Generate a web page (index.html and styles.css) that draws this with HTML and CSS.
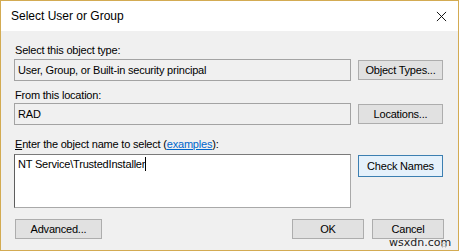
FILE: index.html
```html
<!DOCTYPE html>
<html lang="en">
<head>
    <meta charset="UTF-8">
    <title>Select User or Group</title>
    <link rel="stylesheet" href="styles.css">
</head>
<body>
    <div class="dialog">
        <div class="titlebar">
            <span class="title">Select User or Group</span>
            <svg class="close" viewBox="0 0 12 12" xmlns="http://www.w3.org/2000/svg">
                <path d="M1 1L11 11M11 1L1 11" stroke="#000" stroke-width="1" fill="none" />
            </svg>
        </div>
        <div class="content">
            <div class="label">Select this object type:</div>
            <div class="row">
                <div class="field readonly">User, Group, or Built-in security principal</div>
                <button class="btn">Object Types...</button>
            </div>

            <div class="label second">From this location:</div>
            <div class="row">
                <div class="field readonly">RAD</div>
                <button class="btn">Locations...</button>
            </div>

            <div class="label third"><u>E</u>nter the object name to select (<a href="#" class="link">examples</a>):</div>
            <div class="row names">
                <div class="field editor">NT Service\TrustedInstaller<span class="caret"></span></div>
                <button class="btn default">Check Names</button>
            </div>

            <div class="footer">
                <button class="btn advanced">Advanced...</button>
                <div class="spacer"></div>
                <button class="btn wide">OK</button>
                <button class="btn wide">Cancel</button>
            </div>
        </div>
        <div class="watermark">wsxdn.com</div>
        <div class="grip"></div>
    </div>
</body>
</html>
```

FILE: styles.css
```css
html, body {
    margin: 0;
    padding: 0;
    background: #f0f0f0;
}
.dialog {
    position: relative;
    width: 459px;
    height: 251px;
    box-sizing: border-box;
    border: 1px solid #d3ab52;
    background: #f0f0f0;
    font-family: 'Liberation Sans', Arial, sans-serif;
    font-size: 11px;
    letter-spacing: -0.2px;
    color: #000;
    overflow: hidden;
}
.titlebar {
    height: 30px;
    background: #fff;
    display: flex;
    align-items: center;
    padding: 0 10px;
}
.title {
    flex-grow: 1;
    font-size: 12px;
    letter-spacing: 0;
    color: #000;
}
.close {
    width: 11px;
    height: 11px;
    margin-right: 1px;
}
.content {
    padding: 12px 14px 0 13px;
}
.label {
    height: 14px;
    line-height: 14px;
    padding-left: 1px;
    margin-bottom: 2px;
}
.label.second {
    margin-top: 7px;
    margin-bottom: 1px;
}
.label.third {
    margin-top: 12px;
    margin-bottom: 3px;
}
.link {
    color: #0066cc;
}
.row {
    display: flex;
    align-items: center;
    gap: 7px;
}
.row.names {
    align-items: flex-start;
}
.field {
    width: 337px;
    height: 22px;
    box-sizing: border-box;
    line-height: 20px;
    padding-left: 3px;
    white-space: nowrap;
}
.readonly {
    background: #f0f0f0;
    border: 1px solid #a3a3a3;
}
.editor {
    height: 54px;
    background: #fff;
    border: 1px solid #a9a9a9;
    border-left-color: #5e5e5e;
    border-top-color: #7a7a7a;
    line-height: 18px;
}
.caret {
    display: inline-block;
    width: 1px;
    height: 14px;
    background: #000;
    vertical-align: -3px;
}
.btn {
    width: 85px;
    height: 20px;
    box-sizing: border-box;
    border: 1px solid #adadad;
    background: #e1e1e1;
    font-family: 'Liberation Sans', Arial, sans-serif;
    font-size: 11px;
    letter-spacing: -0.2px;
    color: #000;
    padding: 0;
}
.btn.default {
    height: 22px;
    margin-top: 1px;
    border-color: #3c7fb1;
    background: #e5f1fb;
}
.footer {
    display: flex;
    margin-top: 11px;
    padding-left: 1px;
    gap: 8px;
}
.spacer {
    flex-grow: 1;
}
.btn.advanced {
    width: 87px;
}
.btn.wide {
    width: 72px;
}
.watermark {
    position: absolute;
    left: 388px;
    top: 236px;
    font-family: 'DejaVu Sans', sans-serif;
    font-size: 11px;
    letter-spacing: 0;
    line-height: 12px;
    color: #222;
}
.grip {
    position: absolute;
    right: 11px;
    bottom: 2px;
    width: 6px;
    height: 6px;
    background: radial-gradient(circle, #b5b5b5 45%, transparent 50%) 0 0 / 3px 3px;
}
```
